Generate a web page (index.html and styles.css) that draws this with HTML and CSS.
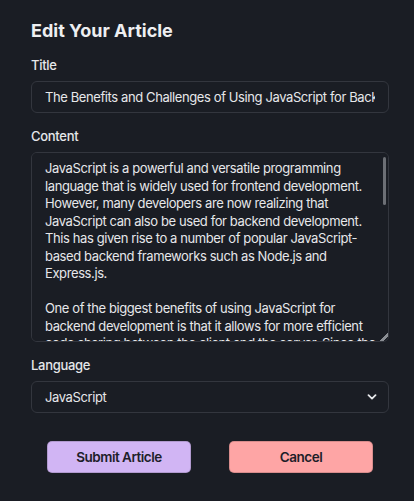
FILE: index.html
```html
<!DOCTYPE html>
<html lang="en">
<head>
<meta charset="utf-8">
<title>Edit Your Article</title>
<link rel="stylesheet" href="styles.css">
</head>
<body>
<form class="editor">
  <h1 class="heading">Edit Your Article</h1>
  <div class="field">
    <label class="label" for="title">Title</label>
    <input class="control input" id="title" type="text" value="The Benefits and Challenges of Using JavaScript for Backend Development">
  </div>
  <div class="field">
    <label class="label" for="content">Content</label>
    <div class="textarea-wrap">
      <textarea class="control textarea" id="content">JavaScript is a powerful and versatile programming language that is widely used for frontend development. However, many developers are now realizing that JavaScript can also be used for backend development. This has given rise to a number of popular JavaScript-based backend frameworks such as Node.js and Express.js.

One of the biggest benefits of using JavaScript for backend development is that it allows for more efficient code sharing between the client and the server. Since the same language is used on both sides, developers can reuse logic, validation rules and data models, which reduces duplication and speeds up development.

Another advantage is the large and active ecosystem. The npm registry offers hundreds of thousands of packages that make it easy to add features such as authentication, database access and real-time communication to an application.

JavaScript is also well suited to building fast, scalable network applications. Its non-blocking, event-driven architecture allows a single server to handle many concurrent connections with relatively little overhead, which makes it a good fit for APIs and chat services.

However, there are also challenges. JavaScript's single-threaded model can make CPU-intensive tasks difficult to handle, and asynchronous code can become hard to read and maintain without careful structure and good tooling.

In conclusion, JavaScript is a strong choice for many backend projects, but developers should weigh its benefits and challenges carefully before deciding.</textarea>
      <span class="scroll-thumb" aria-hidden="true"></span>
    </div>
  </div>
  <div class="field">
    <label class="label" for="language">Language</label>
    <div class="select-wrap">
      <select class="control select" id="language">
        <option>JavaScript</option>
        <option>TypeScript</option>
        <option>Python</option>
      </select>
      <svg class="chevron" width="10" height="6" viewBox="0 0 10 6" aria-hidden="true"><polyline points="1.5,1.2 5,4.6 8.5,1.2" fill="none" stroke="#e6e7ea" stroke-width="1.8" stroke-linecap="round" stroke-linejoin="round"/></svg>
    </div>
  </div>
  <div class="actions">
    <button type="button" class="btn btn-submit">Submit Article</button>
    <button type="button" class="btn btn-cancel">Cancel</button>
  </div>
</form>
</body>
</html>
```
FILE: styles.css
```css
* { box-sizing: border-box; }
html, body {
  margin: 0;
  background: #1a1d24;
}
body {
  font-family: Inter, "Liberation Sans", sans-serif;
  color: #e9eaec;
}
.editor {
  padding: 19px 25px 20px 31px;
  display: flex;
  flex-direction: column;
}
.heading {
  margin: 0 0 12px;
  font-size: 18px;
  line-height: 24px;
  font-weight: 700;
  color: #eeeff1;
}
.field {
  display: flex;
  flex-direction: column;
  margin-bottom: 13px;
}
.label {
  font-size: 13px;
  line-height: 20px;
  font-weight: 500;
  letter-spacing: -0.3px;
  margin-bottom: 6px;
  color: #e6e7ea;
}
.control {
  width: 100%;
  border: 1px solid #33363e;
  border-radius: 6px;
  background: #1a1d24;
  color: #e6e7ea;
  font-family: Inter, "Liberation Sans", sans-serif;
  font-size: 13px;
  letter-spacing: -0.4px;
  outline: none;
}
.input {
  height: 32px;
  padding: 0 13px;
}
.textarea-wrap {
  position: relative;
  display: flex;
}
.textarea {
  height: 190px;
  padding: 7px 5px 7px 13px;
  line-height: 17.5px;
  resize: vertical;
}
.textarea::-webkit-scrollbar { width: 9px; background: transparent; }
.textarea::-webkit-scrollbar-thumb { background: transparent; }
.textarea::-webkit-scrollbar-corner { background: transparent; }
.textarea::-webkit-resizer {
  background: linear-gradient(135deg, transparent 72%, #8a8d93 72%, #8a8d93 84%, transparent 84%);
}
.scroll-thumb {
  position: absolute;
  top: 5px;
  right: 3.5px;
  width: 2.5px;
  height: 48px;
  border-radius: 2px;
  background: #6c6f75;
  pointer-events: none;
}
.select-wrap {
  position: relative;
}
.select {
  height: 32px;
  padding: 0 32px 0 13px;
  appearance: none;
  -webkit-appearance: none;
}
.chevron {
  position: absolute;
  right: 12px;
  top: 13px;
  pointer-events: none;
}
.actions {
  display: flex;
  gap: 38px;
  padding: 15px 16px 0;
}
.btn {
  flex: 1;
  height: 32px;
  border: 1px solid rgba(0,0,0,0.15);
  border-radius: 5px;
  font-family: Inter, "Liberation Sans", sans-serif;
  font-size: 13.5px;
  font-weight: 600;
  letter-spacing: -0.5px;
  color: #1d2029;
  cursor: pointer;
}
.btn-submit { background: #d1b5f4; }
.btn-cancel { background: #fea5a5; }
```
